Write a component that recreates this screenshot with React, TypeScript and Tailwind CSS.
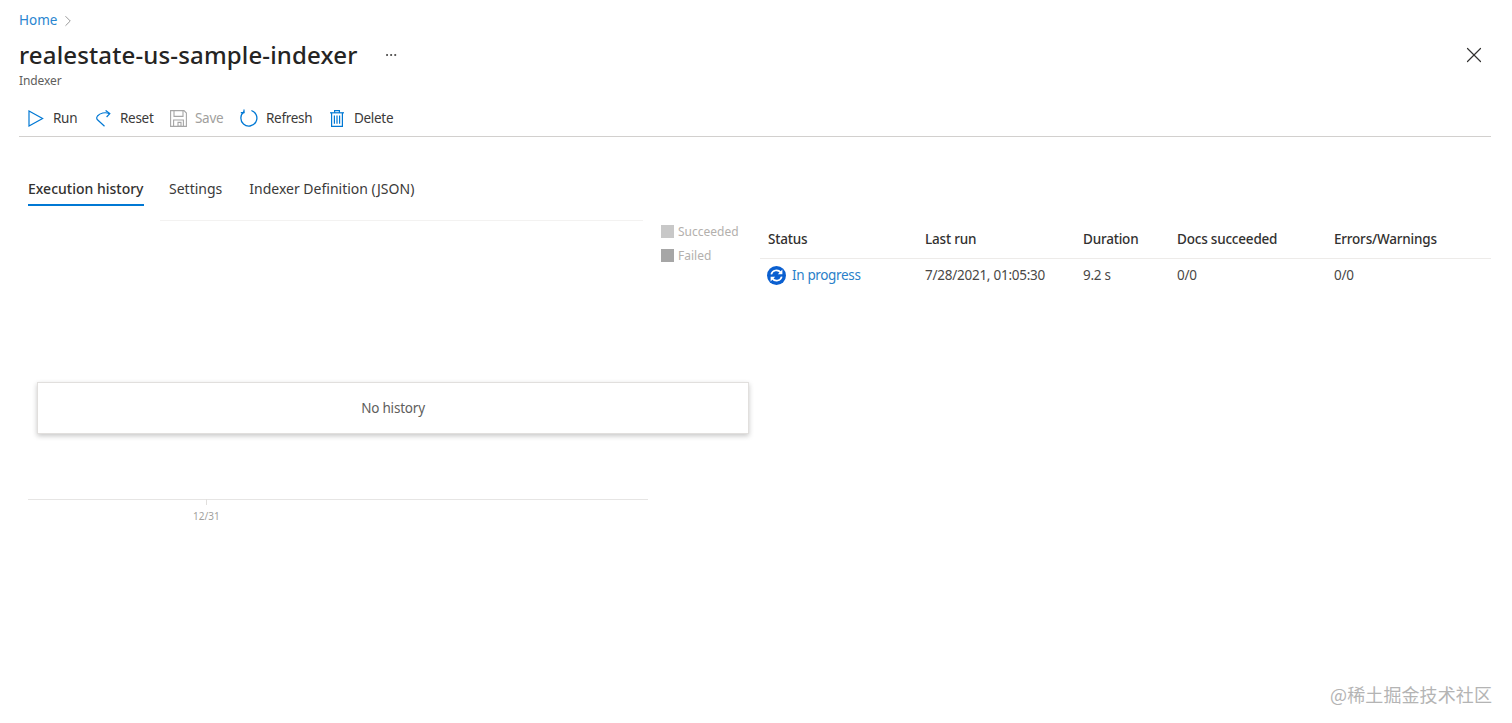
import React from 'react';
import { ChevronRight, Ellipsis, X } from 'lucide-react';

const BLUE = '#0078d4';

function RunIcon() {
  return (
    <svg width="16" height="17" viewBox="0 0 16 17" fill="none" stroke={BLUE} strokeWidth="1.2">
      <path d="M1 1 L14.6 8.5 L1 16 Z" />
    </svg>
  );
}

function ResetIcon() {
  return (
    <svg width="15" height="17" viewBox="0 0 15 17" fill="none" stroke={BLUE} strokeWidth="1.2">
      <path d="M13.4 3.6 C9 1.8 4 3 1.5 6 C0.4 7.5 0.4 8.6 1.5 9.8 L8.5 16.2" />
      <path d="M9.6 0.4 L13.8 3.6 L10.6 7" />
    </svg>
  );
}

function SaveIcon() {
  return (
    <svg width="17" height="17" viewBox="0 0 17 17" fill="none" stroke="#a6a6a6" strokeWidth="1.1">
      <path d="M0.6 0.6 H14 L16.4 3 V16.4 H0.6 Z" />
      <path d="M4 0.6 V6.4 H13 V0.6" />
      <path d="M3.6 16.4 V10 H13.4 V16.4" />
      <path d="M8 12.4 V16.4 H11 V12.4 Z" />
    </svg>
  );
}

function RefreshIcon() {
  return (
    <svg width="18" height="18" viewBox="0 0 18 18" fill="none" stroke={BLUE} strokeWidth="1.3">
      <path d="M11.4 1.5 A8 8 0 1 1 4.2 2.6" />
      <path d="M4 0.4 V3.6 H0.8" strokeWidth="1.2" />
    </svg>
  );
}

function DeleteIcon() {
  return (
    <svg width="14" height="17" viewBox="0 0 14 17" fill="none" stroke={BLUE} strokeWidth="1.2">
      <path d="M0 2.8 H14" />
      <path d="M4.6 2.8 V0.6 H9.4 V2.8" />
      <path d="M1.6 2.8 V16.4 H12.4 V2.8" />
      <path d="M4.4 5.5 V13.8 M7 5.5 V13.8 M9.6 5.5 V13.8" />
    </svg>
  );
}

function InProgressIcon() {
  return (
    <svg width="19" height="19" viewBox="0 0 19 19">
      <circle cx="9.5" cy="9.5" r="9.5" fill="#0a5fd0" />
      <g fill="none" stroke="#fff" strokeWidth="1.7">
        <path d="M4.3 8.4 A5.3 5.3 0 0 1 13.6 6.4" />
        <path d="M14.7 10.6 A5.3 5.3 0 0 1 5.4 12.6" />
      </g>
      <path d="M15.4 3.6 V8.2 H10.8 Z" fill="#fff" />
      <path d="M3.6 15.4 V10.8 H8.2 Z" fill="#fff" />
    </svg>
  );
}

const actions = [
  { label: 'Run', icon: <RunIcon />, w: 'w-[77px]', gap: 'w-[34px] pl-[9px]' },
  { label: 'Reset', icon: <ResetIcon />, w: 'w-[74px]', gap: 'w-[24px]' },
  { label: 'Save', icon: <SaveIcon />, w: 'w-[70px]', gap: 'w-[25px]', disabled: true },
  { label: 'Refresh', icon: <RefreshIcon />, w: 'w-[90px]', gap: 'w-[26px]' },
  { label: 'Delete', icon: <DeleteIcon />, w: 'w-[70px]', gap: 'w-[24px]' },
];

const columns = [
  { label: 'Status', w: 'w-[157px]' },
  { label: 'Last run', w: 'w-[158px]' },
  { label: 'Duration', w: 'w-[94px]' },
  { label: 'Docs succeeded', w: 'w-[157px]' },
  { label: 'Errors/Warnings', w: 'flex-1' },
];

export default function App() {
  return (
    <div className="relative h-[723px] w-[1512px] overflow-hidden bg-white font-['Noto_Sans','Open_Sans',sans-serif] text-[#3b3a39]">
      <div className="pl-[19px] pr-[21px]">
        <div className="flex h-[40px] items-center pt-[1px]">
          <span className="text-[13.5px] text-[#2a86d0]">Home</span>
          <ChevronRight className="ml-[2px] text-[#777]" size={18} strokeWidth={1} />
        </div>

        <div className="flex h-[30px] items-center">
          <h1 className="text-[24px] font-medium leading-[30px] tracking-[0.15px] text-[#252423]">
            realestate-us-sample-indexer
          </h1>
          <Ellipsis className="ml-[27px] text-[#323130]" size={14} strokeWidth={1.5} />
          <X className="ml-auto mr-[4px] text-[#323130]" size={26} strokeWidth={1.1} />
        </div>

        <div className="mt-[3px] h-[16px] text-[12px] leading-[16px] tracking-[-0.1px] text-[#605e5c]">Indexer</div>

        <div className="mt-[19px] flex h-[20px] items-center">
          {actions.map(a => (
            <div key={a.label} className={`flex items-center ${a.w}`}>
              <span className={`flex shrink-0 justify-start ${a.gap}`}>{a.icon}</span>
              <span className={`text-[13.5px] leading-[20px] tracking-[-0.3px] ${a.disabled ? 'text-[#a19f9d]' : 'text-[#3b3a39]'}`}>
                {a.label}
              </span>
            </div>
          ))}
        </div>
        <div className="mt-[8px] h-[1px] bg-[#d2d0ce]" />

        <div className="ml-[9px] mt-[42px] flex h-[27px] items-start text-[14px] leading-[20px]">
          <div className="h-[27px] w-[116px] whitespace-nowrap border-b-2 border-[#0078d4] font-medium text-[#323130]">Execution history</div>
          <div className="ml-[25px]">Settings</div>
          <div className="ml-[27px]">Indexer Definition (JSON)</div>
        </div>

        <div className="mt-[2px] flex">
          {/* chart side */}
          <div className="relative h-[320px] w-[741px] shrink-0">
            <div className="absolute left-[141px] top-[12px] h-[1px] w-[483px] bg-[#f3f2f1]" />
            <div className="absolute left-[9px] top-[291px] h-[1px] w-[620px] bg-[#e6e5e4]" />
            <div className="absolute left-[187px] top-[291px] h-[6px] w-[1px] bg-[#e1dfdd]" />
            <div className="absolute left-[174px] top-[301px] text-[10px] leading-[14px] text-[#a19f9d]">12/31</div>

            <div className="absolute left-[642px] top-[17px] flex flex-col gap-[11px] text-[12px] leading-[13px] text-[#b3b0ad]">
              <div className="flex items-center gap-[4px]">
                <span className="h-[13px] w-[13px] bg-[#c8c8c8]" />
                <span>Succeeded</span>
              </div>
              <div className="flex items-center gap-[4px]">
                <span className="h-[13px] w-[13px] bg-[#a6a6a6]" />
                <span>Failed</span>
              </div>
            </div>

            <div className="absolute left-[18px] top-[174px] flex h-[52px] w-[712px] items-center justify-center border border-[#e1dfdd] bg-white text-[13.5px] tracking-[-0.2px] text-[#605e5c] shadow-[0_2px_5px_rgba(0,0,0,0.22)]">
              No history
            </div>
          </div>

          {/* run table */}
          <div className="flex-1 pt-[14px]">
            <div className="flex h-[37px] items-center border-b border-[#edebe9] pb-[2px] pl-[8px] text-[13.5px] font-medium tracking-[-0.2px] text-[#323130]">
              {columns.map(c => (
                <div key={c.label} className={c.w}>{c.label}</div>
              ))}
            </div>
            <div className="flex h-[32px] items-center pl-[8px] text-[13.5px] tracking-[-0.25px] text-[#4a4846]">
              <div className="-ml-[1px] flex w-[158px] items-center gap-[6px]">
                <InProgressIcon />
                <span className="tracking-[-0.35px] text-[#2a7fc9]">In progress</span>
              </div>
              <div className="w-[158px]">7/28/2021, 01:05:30</div>
              <div className="w-[94px]">9.2 s</div>
              <div className="w-[157px]">0/0</div>
              <div className="flex-1">0/0</div>
            </div>
          </div>
        </div>
      </div>

      <div className="absolute right-[20px] top-[682px] font-['Noto_Sans_CJK_SC',sans-serif] text-[18px] leading-[24px] tracking-[0.1px] text-[#b4b4b4]">
        @稀土掘金技术社区
      </div>
    </div>
  );
}
